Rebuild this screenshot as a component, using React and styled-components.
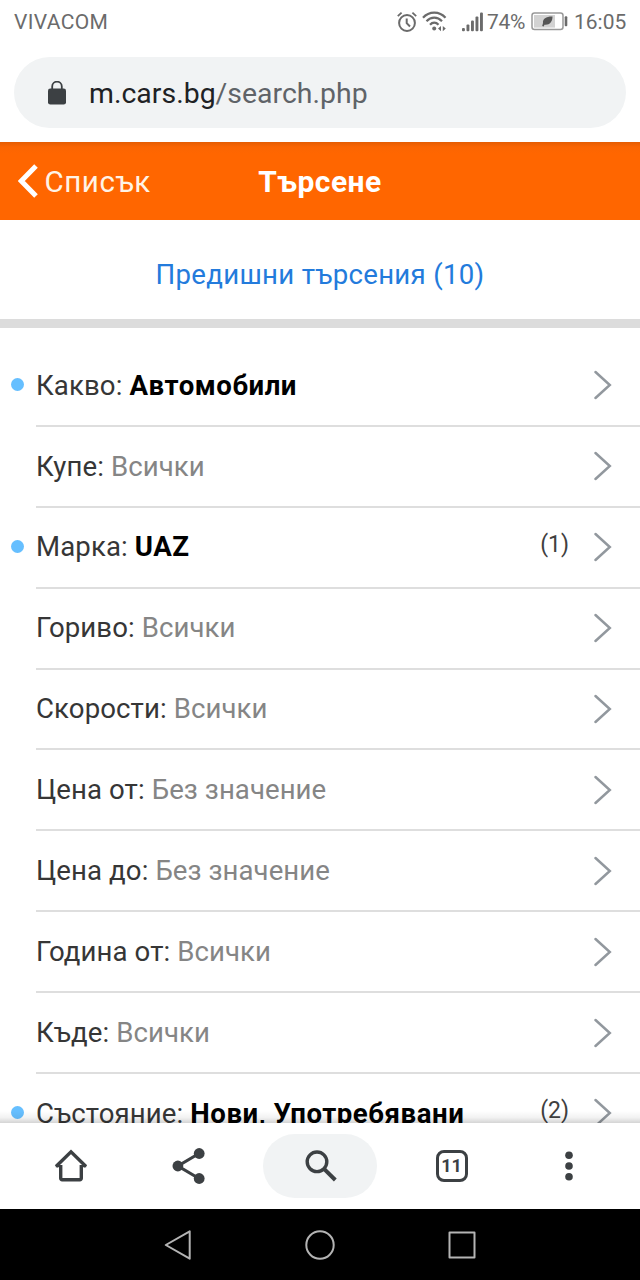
import React from "react";
import styled, { createGlobalStyle } from "styled-components";

const Global = createGlobalStyle`
  * { box-sizing: border-box; }
  body { margin: 0; background: #fff; font-family: Roboto, "Noto Sans", sans-serif; }
  svg { display: block; flex: none; }
`;

const Screen = styled.div`
  width: 640px;
  height: 1280px;
  display: flex;
  flex-direction: column;
  overflow: hidden;
  background: #fff;
`;

const StatusBar = styled.div`
  height: 43px;
  flex: none;
  display: flex;
  align-items: center;
  padding: 0 14px 0 14px;
  font-size: 21px;
  line-height: 24px;
  color: #6b6b6b;
`;

const Carrier = styled.span`
  flex: 1;
  letter-spacing: 0.35px;
`;

const StatusIcons = styled.div`
  display: flex;
  align-items: center;
`;

const IconGap = styled.span`
  width: ${(p) => p.$w}px;
`;

const Percent = styled.span`
  width: 44px;
  margin-left: 4px;
  white-space: nowrap;
  letter-spacing: -0.3px;
`;

const Clock = styled.span`
  width: 52px;
  margin-left: 6px;
  white-space: nowrap;
`;

const AddressArea = styled.div`
  height: 99px;
  flex: none;
  padding: 14px 14px 0;
`;

const AddressBar = styled.div`
  height: 71px;
  display: flex;
  align-items: center;
  gap: 22px;
  padding: 1px 0 0 33px;
  border-radius: 36px;
  background: #f1f3f4;
  color: #5f6368;
  font-size: 28.4px;
  letter-spacing: 0.03px;
`;

const Domain = styled.span`
  color: #202124;
`;

const Header = styled.header`
  height: 78px;
  flex: none;
  display: grid;
  grid-template-columns: 1fr auto 1fr;
  align-items: center;
  padding: 0 18px;
  background: linear-gradient(#e45c02, #fb6502 5px, #ff6600 12px);
  color: #fff;
  font-size: 29.5px;
`;

const Back = styled.div`
  display: flex;
  align-items: center;
  gap: 6.5px;
  color: #fff3e6;
  letter-spacing: 0.55px;
`;

const BackLabel = styled.span`
  padding-top: 2px;
`;

const Title = styled.h1`
  margin: 0;
  padding-top: 1px;
  font-size: 30px;
  font-weight: 700;
  letter-spacing: 0.45px;
`;

const Previous = styled.a`
  height: 108px;
  flex: none;
  display: flex;
  align-items: center;
  justify-content: center;
  padding-top: 9px;
  border-bottom: 9px solid #dcdcdc;
  color: #237bdc;
  font-size: 27.6px;
  letter-spacing: 0.3px;
`;

const List = styled.main`
  height: 795px;
  flex: none;
  overflow: hidden;
  padding-top: 18px;
  position: relative;
`;

const Fade = styled.div`
  position: absolute;
  left: 0;
  right: 0;
  bottom: 0;
  height: 12px;
  background: linear-gradient(rgba(0, 0, 0, 0), rgba(0, 0, 0, 0.05) 55%, rgba(0, 0, 0, 0.17));
`;

const Row = styled.div`
  height: 80.9px;
  display: flex;
  align-items: center;
  padding-left: 11px;
`;

const Dot = styled.span`
  width: 13px;
  height: 13px;
  margin: 0 12px 3px 0;
  border-radius: 50%;
  background: ${(p) => (p.$on ? "#66bfff" : "transparent")};
`;

const RowBody = styled.div`
  flex: 1;
  height: 100%;
  display: flex;
  align-items: center;
  padding-right: 28px;
  border-bottom: 2px solid #dedede;
`;

const Label = styled.div`
  flex: 1;
  white-space: nowrap;
  font-size: 27.6px;
  line-height: 32px;
  letter-spacing: 0.1px;
  color: #363636;
  padding-top: 0.5px;
`;

const Value = styled.span`
  color: ${(p) => (p.$set ? "#000" : "#858585")};
  font-weight: ${(p) => (p.$set ? 700 : 400)};
  letter-spacing: ${(p) => (p.$set ? "0.55px" : "0.05px")};
`;

const Count = styled.span`
  margin: 0 25px 5px 0;
  font-size: 23px;
  color: #404040;
`;

const Toolbar = styled.nav`
  height: 86px;
  flex: none;
  display: flex;
  align-items: center;
  justify-content: space-between;
  padding: 0 54px;
  background: #fff;
`;

const ToolItem = styled.div`
  width: 34px;
  height: 36px;
  display: flex;
  align-items: center;
  justify-content: center;
`;

const SearchPill = styled.div`
  width: 114px;
  height: 64px;
  margin: 0 -26px;
  padding-left: 2px;
  display: flex;
  align-items: center;
  justify-content: center;
  border-radius: 32px;
  background: #f1f3f4;
`;

const TabCount = styled.div`
  width: 32px;
  height: 32px;
  display: flex;
  align-items: center;
  justify-content: center;
  border: 3px solid #3c4043;
  border-radius: 8px;
  color: #3c4043;
  font-size: 18px;
  font-weight: 700;
  line-height: 1;
`;

const SystemNav = styled.footer`
  height: 71px;
  flex: none;
  display: flex;
  align-items: center;
  justify-content: center;
  gap: 112px;
  background: #000;
`;

const AlarmIcon = () => (
  <svg width="20" height="22" viewBox="0 0 20 22" fill="none" stroke="#6b6b6b">
    <circle cx="10" cy="12" r="7.9" strokeWidth="2" />
    <path d="M9.7 7.5v4.7l3.3 3.3" strokeWidth="2" />
    <path d="M.8 5.2 4.6 1.6M19.2 5.2 15.4 1.6" strokeWidth="1.8" />
  </svg>
);

const WifiIcon = () => (
  <svg width="25" height="21" viewBox="0 0 25 21" fill="none" stroke="#6b6b6b">
    <path d="M1 6.7C7-.2 17.5-.2 23.5 6.7" strokeWidth="2.2" />
    <path d="M4.5 10.2C9 5.5 15.5 5.5 20 10.2" strokeWidth="2.2" />
    <path d="M8 13.7C10.5 11 14 11 16.5 13.7" strokeWidth="2.2" />
    <circle cx="12.2" cy="17.6" r="2" fill="#6b6b6b" stroke="none" />
    <path d="M19 15v5.2l-3-2.6zM20.8 15v5.2l3-2.6z" fill="#6b6b6b" stroke="none" />
  </svg>
);

const SignalIcon = () => (
  <svg width="21" height="20" viewBox="0 0 21 20" fill="#6b6b6b">
    <rect x="0" y="16" width="2.9" height="3.3" rx="1" />
    <rect x="4.5" y="12.5" width="2.9" height="6.8" rx="1" />
    <rect x="9" y="8.5" width="2.9" height="10.8" rx="1" />
    <rect x="13.5" y="4.5" width="2.9" height="14.8" rx="1" />
    <rect x="18" y="0.5" width="2.9" height="18.8" rx="1" />
  </svg>
);

const BatteryIcon = () => (
  <svg width="37" height="19" viewBox="0 0 37 19">
    <rect x="1" y="1" width="31" height="16.6" rx="2.5" fill="#fff" stroke="#999" strokeWidth="1.5" />
    <rect x="3" y="3" width="21" height="12.6" fill="#d2d2d2" />
    <path d="M21.5 4.5c-6-.2-10 2-9.5 6.500l-.8 3 1.400.4.9-1.700c5 .6 8-2.700 8-8.200z" fill="#555" />
    <rect x="33.7" y="4.3" width="2.6" height="10" rx="1" fill="#6b6b6b" />
  </svg>
);

const LockIcon = () => (
  <svg width="20" height="24" viewBox="0 0 20 24">
    <path d="M5.2 9V5.5a4.8 4.8 0 0 1 9.6 0V9" fill="none" stroke="#3c4043" strokeWidth="1.8" />
    <rect x="1" y="7.5" width="18" height="16" rx="2.3" fill="#3c4043" />
  </svg>
);

const BackIcon = () => (
  <svg width="20" height="34" viewBox="0 0 20 34" fill="none" stroke="#fff" strokeWidth="5">
    <path d="M18 2 3.3 17 18 32" />
  </svg>
);

const Chevron = () => (
  <svg width="18" height="30" viewBox="0 0 18 30" fill="none" stroke="#92989e" strokeWidth="2.5" strokeLinecap="round">
    <path d="M1.5 2 15.8 15 1.5 28" />
  </svg>
);

const HomeIcon = () => (
  <svg width="34" height="34" viewBox="0 0 34 34" fill="none" stroke="#3c4043" strokeWidth="3.4">
    <path d="M6.7 16v13.3a1.4 1.4 0 0 0 1.4 1.4h17.8a1.4 1.4 0 0 0 1.4-1.4V16" />
    <path d="M2 17.5 17 2.8 32 17.5" />
    <path d="M1.8 17.3h5M27.2 17.3h5" strokeWidth="2" />
  </svg>
);

const ShareIcon = () => (
  <svg width="34" height="36" viewBox="0 0 34 36" fill="#3c4043">
    <path d="M27 5.5 6 18 27 30.500" fill="none" stroke="#3c4043" strokeWidth="3.2" />
    <circle cx="27.2" cy="5.5" r="5.4" />
    <circle cx="5.9" cy="18" r="5.4" />
    <circle cx="27.2" cy="30.5" r="5.4" />
  </svg>
);

const SearchIcon = () => (
  <svg width="34" height="34" viewBox="0 0 34 34" fill="none" stroke="#3c4043">
    <circle cx="13" cy="12.8" r="9.8" strokeWidth="3.4" />
    <path d="M19.8 19.6 31.3 31" strokeWidth="4" />
  </svg>
);

const MoreIcon = () => (
  <svg width="8" height="30" viewBox="0 0 8 30" fill="#3c4043">
    <circle cx="4" cy="4.3" r="3.8" />
    <circle cx="4" cy="15" r="3.8" />
    <circle cx="4" cy="25.7" r="3.8" />
  </svg>
);

const NavBackIcon = () => (
  <svg width="30" height="30" viewBox="0 0 30 30" fill="none" stroke="#b4b4b4" strokeWidth="2" strokeLinejoin="round">
    <path d="M26.7 1.3v27.4L2.8 15z" />
  </svg>
);

const NavHomeIcon = () => (
  <svg width="30" height="30" viewBox="0 0 30 30" fill="none" stroke="#b4b4b4" strokeWidth="2">
    <circle cx="15" cy="15" r="13.7" />
  </svg>
);

const NavRecentIcon = () => (
  <svg width="30" height="30" viewBox="0 0 30 30" fill="none" stroke="#b4b4b4" strokeWidth="2" strokeLinejoin="round">
    <rect x="2.5" y="2.5" width="25" height="25" />
  </svg>
);

const filters = [
  { label: "Какво", value: "Автомобили", set: true },
  { label: "Купе", value: "Всички" },
  { label: "Марка", value: "UAZ", set: true, count: 1 },
  { label: "Гориво", value: "Всички" },
  { label: "Скорости", value: "Всички" },
  { label: "Цена от", value: "Без значение" },
  { label: "Цена до", value: "Без значение" },
  { label: "Година от", value: "Всички" },
  { label: "Къде", value: "Всички" },
  { label: "Състояние", value: "Нови, Употребявани", set: true, count: 2 },
];

export default function App() {
  return (
    <Screen>
      <Global />
      <StatusBar>
        <Carrier>VIVACOM</Carrier>
        <StatusIcons>
          <AlarmIcon />
          <IconGap $w={5} />
          <WifiIcon />
          <IconGap $w={15} />
          <SignalIcon />
        </StatusIcons>
        <Percent>74%</Percent>
        <BatteryIcon />
        <Clock>16:05</Clock>
      </StatusBar>
      <AddressArea>
        <AddressBar>
          <LockIcon />
          <span>
            <Domain>m.cars.bg</Domain>/search.php
          </span>
        </AddressBar>
      </AddressArea>
      <Header>
        <Back>
          <BackIcon />
          <BackLabel>Списък</BackLabel>
        </Back>
        <Title>Търсене</Title>
      </Header>
      <Previous>Предишни търсения (10)</Previous>
      <List>
        {filters.map((f) => (
          <Row key={f.label}>
            <Dot $on={f.set} />
            <RowBody>
              <Label>
                {f.label}: <Value $set={f.set}>{f.value}</Value>
              </Label>
              {f.count && <Count>({f.count})</Count>}
              <Chevron />
            </RowBody>
          </Row>
        ))}
        <Fade />
      </List>
      <Toolbar>
        <ToolItem><HomeIcon /></ToolItem>
        <ToolItem><ShareIcon /></ToolItem>
        <SearchPill><SearchIcon /></SearchPill>
        <ToolItem><TabCount>11</TabCount></ToolItem>
        <ToolItem><MoreIcon /></ToolItem>
      </Toolbar>
      <SystemNav>
        <NavBackIcon />
        <NavHomeIcon />
        <NavRecentIcon />
      </SystemNav>
    </Screen>
  );
}
